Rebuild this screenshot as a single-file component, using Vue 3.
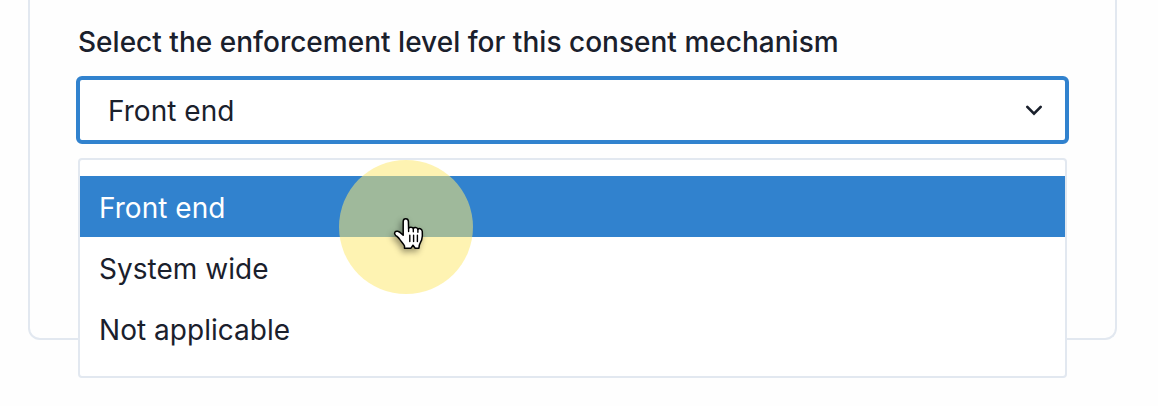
<script setup>
const options = ['Front end', 'System wide', 'Not applicable']
const selected = 'Front end'
</script>

<template>
  <main class="page">
    <section class="card">
      <div class="label">Select the enforcement level for this consent mechanism</div>
      <div class="field">
        <div class="select">
          <span>{{ selected }}</span>
          <svg class="chevron" width="18" height="12" viewBox="0 0 18 12">
            <path d="M2.3 2.9 9 9.6l6.7-6.7" fill="none" stroke="#1a202c" stroke-width="2.7" stroke-linecap="round" />
          </svg>
        </div>
        <div class="menu">
          <div v-for="o in options" :key="o" class="option" :class="{ active: o === selected }">{{ o }}</div>
        </div>
      </div>
    </section>
    <div class="halo"></div>
    <svg class="pointer" width="48" height="48" viewBox="0 0 48 48">
      <path
        d="M20.5 34.2 V32 C19.5 29.6 17 27.5 15.7 25.4 C14.6 23.5 12.8 22.4 11.5 21.2 C9.4 19 11.2 16.6 13.8 17.3 C16 17.9 17.6 19.8 19.2 21.3 L19.2 7.4 C19.2 3.8 24.2 3.8 24.4 7.4 L24.6 14.4 C25 12.7 28.8 12.7 29.3 14.6 C30 13 33.2 13.3 33.9 15.2 C34.8 14 38 14.6 38.3 17.5 C38.6 20.5 38.4 23.4 37.6 26.2 C36.6 28.2 35.1 29.8 34.9 34.2 L31.2 34.2 L29 31.2 L27 34.2 Z"
        fill="#fff" stroke="#000" stroke-width="1.5" stroke-linejoin="round"
      />
      <path d="M24.6 14.3v3.2M29.3 14.7v3M33.9 15.3v3M25.8 21.2v6.4M29.6 21.2v6.4M33.4 21.2v6.4" fill="none" stroke="#000" stroke-width="1.4" stroke-linecap="round" />
    </svg>
  </main>
</template>

<style>
body { margin: 0; background: #fefefe; }
</style>

<style scoped>
.page {
  position: relative;
  box-sizing: border-box;
  width: 1158px;
  height: 406px;
  padding: 0 41px 0 28px;
  overflow: hidden;
  font-family: Inter, "Liberation Sans", sans-serif;
  font-size: 28px;
  letter-spacing: 0.03px;
  color: #1a202c;
}
.card {
  box-sizing: border-box;
  height: 340px;
  padding: 21px 46px 0;
  border: 2px solid #e2e8f0;
  border-top: 0;
  border-radius: 0 0 12px 12px;
}
.label {
  height: 55px;
  padding-left: 2px;
  line-height: 42px;
  font-weight: 500;
  letter-spacing: 0.02px;
  white-space: nowrap;
}
.field { position: relative; }
.select {
  display: flex;
  box-sizing: border-box;
  height: 68px;
  padding: 2px 22px 0 28px;
  align-items: center;
  justify-content: space-between;
  border: 4px solid #3182ce;
  border-radius: 6px;
  background: #fff;
}
.chevron { margin-top: -2px; }
.menu {
  position: absolute;
  top: 82px;
  left: 2px;
  right: 2px;
  box-sizing: border-box;
  height: 220px;
  padding-top: 16px;
  border: 2px solid #e2e8f0;
  border-radius: 4px;
  background: #fff;
}
.option {
  height: 61px;
  padding-left: 19px;
  line-height: 64px;
}
.active { background: #3182ce; color: #fff; }
.halo {
  position: absolute;
  left: 339px;
  top: 160px;
  width: 134px;
  height: 134px;
  border-radius: 50%;
  background: rgba(254, 232, 112, 0.54);
}
.pointer {
  position: absolute;
  left: 384px;
  top: 214px;
  filter: drop-shadow(-2px 3px 3px rgba(0, 0, 0, 0.4));
}
</style>
